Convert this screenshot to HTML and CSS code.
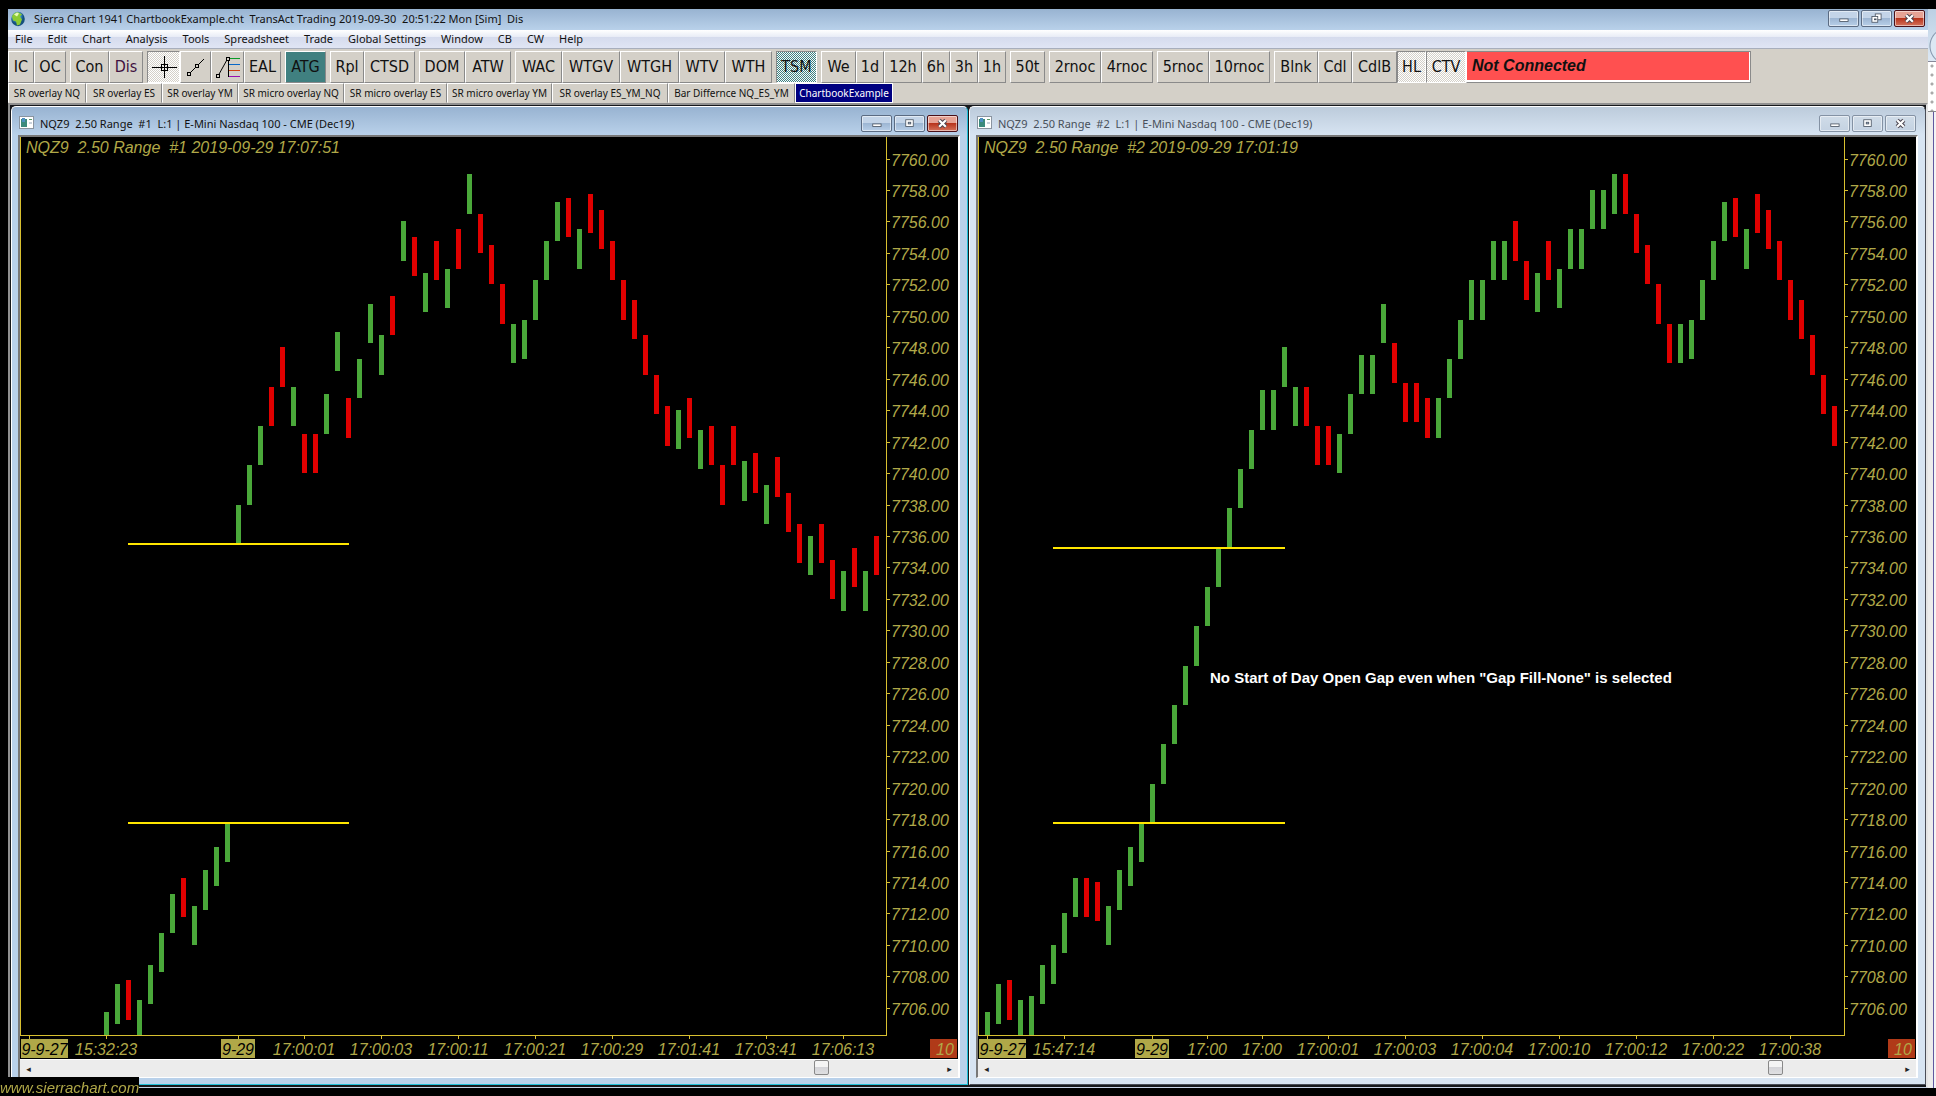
FILE: index.html
```html
<!DOCTYPE html>
<html lang="en">
<head>
<meta charset="utf-8">
<title>Sierra Chart 1941 ChartbookExample.cht</title>
<link rel="stylesheet" href="styles.css">
</head>
<body>
<svg class="defs" width="0" height="0" aria-hidden="true">
  <symbol id="i-min" viewBox="0 0 30 18"><rect x="10.500" y="9.500" width="10" height="3" fill="#fff" stroke="#4b5563"/></symbol>
  <symbol id="i-max" viewBox="0 0 30 18"><rect x="10.500" y="4.500" width="9" height="8" fill="#fff" stroke="#4b5563"/><rect x="13.500" y="7.500" width="3" height="2" fill="#a9c0da" stroke="#4b5563"/></symbol>
  <symbol id="i-restore" viewBox="0 0 30 18"><rect x="13.500" y="3.500" width="7" height="7" fill="#fff" stroke="#4b5563"/><rect x="9.500" y="6.500" width="7" height="7" fill="#fff" stroke="#4b5563"/><rect x="12.500" y="9.500" width="2" height="1" fill="#a9c0da" stroke="#4b5563"/></symbol>
  <symbol id="i-close" viewBox="0 0 30 18"><path d="M11 5l8 8M19 5l-8 8" stroke="#4b4550" stroke-width="5"/><path d="M11 5l8 8M19 5l-8 8" stroke="#fff" stroke-width="2.600"/></symbol>
  <symbol id="i-chart" viewBox="0 0 15 13"><rect x=".5" y=".5" width="14" height="12" fill="#fff" stroke="#8a94a0"/><rect x="2" y="3" width="6" height="8" fill="#3c8a7c"/><rect x="3" y="2" width="3" height="4" fill="#4d8fc0"/><rect x="10" y="3" width="3" height="1" fill="#5c9a6a"/><rect x="10" y="6" width="3" height="2" fill="#c9d2dc"/></symbol>
</svg>
<div class="screen">
  <main class="app">
    <header class="titlebar">
      <svg class="globe" viewBox="0 0 14 15"><defs><radialGradient id="g" cx="40%" cy="30%"><stop offset="0" stop-color="#d9f1ff"/><stop offset=".5" stop-color="#3f9bd8"/><stop offset="1" stop-color="#14507e"/></radialGradient></defs><ellipse cx="7" cy="7.500" rx="6.800" ry="7.200" fill="url(#g)"/><path d="M1 5C2 2 5 0 8 1l3 2-2 2 2 3-2 5-3 1-1-4-3-1z" fill="#8ccb32"/><path d="M3 3l3-2 2 1-2 3z" fill="#e9f9b5"/></svg>
      <h1 class="caption">Sierra Chart 1941 ChartbookExample.cht&nbsp; TransAct Trading 2019-09-30&nbsp; 20:51:22 Mon [Sim]&nbsp; Dis</h1>
      <div class="winbtns">
        <button class="winbtn" aria-label="Minimize"><svg><use href="#i-min"/></svg></button>
        <button class="winbtn" aria-label="Restore"><svg><use href="#i-restore"/></svg></button>
        <button class="winbtn close" aria-label="Close"><svg><use href="#i-close"/></svg></button>
      </div>
    </header>
    <nav class="menu">
      <button>File</button><button>Edit</button><button>Chart</button><button>Analysis</button><button>Tools</button><button>Spreadsheet</button><button>Trade</button><button>Global Settings</button><button>Window</button><button>CB</button><button>CW</button><button>Help</button>
    </nav>
    <div class="toolbar">
      <div class="group"><button class="w26">IC</button><button class="w32">OC</button></div>
      <div class="group"><button class="w39">Con</button><button class="w34 plum">Dis</button></div>
      <div class="group">
        <button class="w33 on" aria-label="Crosshair"><svg width="28" height="26" viewBox="0 0 28 26" fill="none" stroke="#000"><path d="M14.500 2v22M2 13.500h25"/><rect x="11.500" y="10.500" width="6" height="6"/></svg></button>
        <button class="w31" aria-label="Line"><svg width="24" height="26" viewBox="0 0 24 26" fill="none" stroke="#000"><path d="M5 20L20 5"/><rect x="3.500" y="18.500" width="3" height="3" fill="#d4d0c8"/><rect x="11.500" y="10.500" width="3" height="3" fill="#d4d0c8"/></svg></button>
        <button class="w33" aria-label="Retracement"><svg width="28" height="26" viewBox="0 0 28 26" fill="none"><path d="M14 4.500h12" stroke="#0a9a28"/><path d="M14 10.500h12" stroke="#0868c8"/><path d="M14 16.500h12" stroke="#d04010"/><path d="M14 22.500h12" stroke="#9a10b0"/><path d="M14.500 4v19M4 22L14 4" stroke="#000"/><rect x="12.500" y="3.500" width="3" height="3" stroke="#000" fill="#d4d0c8"/><rect x="2.500" y="20.500" width="3" height="3" stroke="#000" fill="#d4d0c8"/></svg></button>
        <button class="w37">EAL</button>
      </div>
      <div class="group"><button class="w41 teal">ATG</button></div>
      <div class="group"><button class="w34">Rpl</button><button class="w51">CTSD</button></div>
      <div class="group"><button class="w46">DOM</button><button class="w46">ATW</button></div>
      <div class="group"><button class="w47">WAC</button><button class="w58">WTGV</button><button class="w59">WTGH</button><button class="w46">WTV</button><button class="w47">WTH</button></div>
      <div class="group"><button class="w41 on tealon">TSM</button></div>
      <div class="group"><button class="w35">We</button><button class="w28">1d</button><button class="w38">12h</button><button class="w28">6h</button><button class="w28">3h</button><button class="w28">1h</button></div>
      <div class="group"><button class="w35">50t</button></div>
      <div class="group"><button class="w52">2rnoc</button><button class="w52">4rnoc</button></div>
      <div class="group"><button class="w52">5rnoc</button><button class="w61">10rnoc</button></div>
      <div class="group"><button class="w44">Blnk</button><button class="w34">Cdl</button><button class="w45">CdlB</button><button class="w29 on">HL</button><button class="w40 on">CTV</button><output class="status">Not Connected</output></div>
    </div>
    <div class="tabs">
      <button class="t78">SR overlay NQ</button><button class="t76">SR overlay ES</button><button class="t76">SR overlay YM</button><button class="t106">SR micro overlay NQ</button><button class="t103">SR micro overlay ES</button><button class="t105">SR micro overlay YM</button><button class="t116">SR overlay ES_YM_NQ</button><button class="t127">Bar Differnce NQ_ES_YM</button><button class="t98 current">ChartbookExample</button>
    </div>
    <div class="workspace">
      <section class="window active">
        <header class="wintitle">
          <svg class="docicon"><use href="#i-chart"/></svg>
          <h2 class="caption">NQZ9&nbsp; 2.50 Range&nbsp; #1&nbsp; L:1 | E-Mini Nasdaq 100 - CME (Dec19)</h2>
          <div class="winbtns">
            <button class="winbtn" aria-label="Minimize"><svg><use href="#i-min"/></svg></button>
            <button class="winbtn" aria-label="Maximize"><svg><use href="#i-max"/></svg></button>
            <button class="winbtn close" aria-label="Close"><svg><use href="#i-close"/></svg></button>
          </div>
        </header>
        <div class="frame">
          <div class="plot" id="chart1"></div>
          <div class="scroll"><button aria-label="Scroll left">◂</button><div class="track"><div class="thumb" style="margin-left:86%"></div></div><button aria-label="Scroll right">▸</button></div>
        </div>
      </section>
      <section class="window">
        <header class="wintitle">
          <svg class="docicon"><use href="#i-chart"/></svg>
          <h2 class="caption">NQZ9&nbsp; 2.50 Range&nbsp; #2&nbsp; L:1 | E-Mini Nasdaq 100 - CME (Dec19)</h2>
          <div class="winbtns">
            <button class="winbtn" aria-label="Minimize"><svg><use href="#i-min"/></svg></button>
            <button class="winbtn" aria-label="Maximize"><svg><use href="#i-max"/></svg></button>
            <button class="winbtn" aria-label="Close"><svg><use href="#i-close"/></svg></button>
          </div>
        </header>
        <div class="frame">
          <div class="plot" id="chart2"></div>
          <div class="scroll"><button aria-label="Scroll left">◂</button><div class="track"><div class="thumb" style="margin-left:85.500%"></div></div><button aria-label="Scroll right">▸</button></div>
        </div>
      </section>
    </div>
  </main>
  <aside class="behind"><div class="b-title"></div><div class="b-dots"></div><div class="b-body"></div></aside>
</div>
<a class="site" href="#">www.sierrachart.com</a>
<script src="chart.js"></script>
</body>
</html>
```

FILE: styles.css
```css
* { box-sizing: border-box; }
body {
  margin: 0;
  background: #000;
  font: 12px/16px "Noto Sans", "Open Sans", sans-serif;
  color: #111;
}
button { font: inherit; color: inherit; padding: 0; margin: 0; border: 0; background: none; white-space: nowrap; }
h1, h2 { margin: 0; font: inherit; }
.defs { position: absolute; }

.screen { display: flex; min-height: 100vh; padding: 9px 0 8px 8px; }
.app { flex: 1; min-width: 0; display: flex; flex-direction: column; }

/* title bars */
.titlebar {
  display: flex;
  height: 21px;
  padding: 0 3px;
  background: linear-gradient(#98b3d1, #b9d1ea);
}
.globe { width: 14px; height: 16px; margin: 2px 9px 0 0; }
.caption { flex: 1; font-size: 11px; line-height: 19px; white-space: nowrap; }
.winbtns { display: flex; gap: 2px; margin-top: 1px; }
.winbtn {
  width: 31px;
  height: 17px;
  border: 1px solid #5b6b82;
  border-radius: 2px;
  box-shadow: inset 0 0 0 1px rgba(255, 255, 255, .5);
  background: linear-gradient(#c3d4e8 45%, #9db6d3 50%, #b8cfe8);
}
.winbtn svg { display: block; width: 29px; height: 15px; }
.winbtn.close { border-color: #4a1018; background: linear-gradient(#e6a294 45%, #b8341c 50%, #d4735c); }

.menu {
  display: flex;
  gap: 15px;
  height: 19px;
  padding-left: 7px;
  border-bottom: 1px solid #a8aebc;
  background: linear-gradient(#fff, #e8ecf6 38%, #d5dbed 40%, #e0e5f4);
  font-size: 11px;
  line-height: 18px;
}

/* toolbars */
.toolbar {
  display: flex;
  gap: 4px;
  height: 34px;
  padding-top: 2px;
  background: #d4d0c8;
  font: 16px/28px "DejaVu Sans Condensed", "DejaVu Sans", sans-serif;
}
.group { display: flex; height: 32px; }
.toolbar button {
  border: 1px solid;
  border-color: #fff #8a8a8a #8a8a8a #fff;
  background-color: #d4d0c8;
  overflow: hidden;
}
.toolbar svg { display: block; margin: 0 auto; }
.toolbar .plum { color: #401040; }
.toolbar .on {
  border-color: #8a8a8a #fff #fff #8a8a8a;
  background: repeating-conic-gradient(#fff 0 25%, #d4d0c8 0 50%) 0 0 / 2px 2px;
}
.toolbar .teal { background: #408080; }
.toolbar .tealon { background: repeating-conic-gradient(#408080 0 25%, #f4fafa 0 50%) 0 0 / 2px 2px; }
.w26 { width: 26px; } .w28 { width: 28px; } .w29 { width: 29px; } .w31 { width: 31px; }
.w32 { width: 32px; } .w33 { width: 33px; } .w34 { width: 34px; } .w35 { width: 35px; }
.w37 { width: 37px; } .w38 { width: 38px; } .w39 { width: 39px; } .w40 { width: 40px; }
.w41 { width: 41px; } .w44 { width: 44px; } .w45 { width: 45px; } .w46 { width: 46px; }
.w47 { width: 47px; } .w51 { width: 51px; } .w52 { width: 52px; } .w58 { width: 58px; }
.w59 { width: 59px; } .w61 { width: 61px; }
.status {
  width: 285px;
  padding-left: 5px;
  border: 1px solid;
  border-color: #8a8a8a #8a8a8a #8a8a8a #fff;
  box-shadow: inset -1px -2px #fff;
  background: #ff5050;
  font: italic bold 16px/28px "Liberation Sans", sans-serif;
}
.tabs { display: flex; height: 20px; background: #d4d0c8; font-size: 10px; line-height: 17px; }
.tabs button { height: 20px; border: 1px solid; border-color: #fff #8a8a8a #d4d0c8 #fff; }
.tabs .current { background: #000080; color: #fff; border: 1px solid #fff; }
.t76 { width: 76px; } .t78 { width: 78px; } .t98 { width: 98px; } .t103 { width: 103px; }
.t105 { width: 105px; } .t106 { width: 106px; } .t116 { width: 116px; } .t127 { width: 127px; }

/* chart windows */
.workspace {
  flex: 1;
  display: grid;
  grid-template-columns: 1fr 1fr;
  gap: 1px;
  padding: 1px 0 2px 1px;
  border: 2px solid #909090;
  border-right-color: #e4e4e4;
  border-bottom: 1px solid #c8d4e8;
  background: #16181c;
}
.window {
  display: flex;
  flex-direction: column;
  min-width: 0;
  padding: 0 7px 6px 6px;
  border: 1px solid #fff;
  border-right-color: #4a4e58;
  border-bottom-color: #4a4e58;
  border-radius: 5px 5px 0 0;
  background: linear-gradient(#bccbdb, #d7e4f2 28px);
  color: #48505a;
}
.window.active {
  border-right-color: #20c0d8;
  border-bottom-color: #20c0d8;
  background: linear-gradient(#98b3d1, #b9d1ea 28px);
  color: #111;
}
.window:not(.active) .winbtn { border-color: #8492a4; background: linear-gradient(#d0dce8, #c4d2e2); }
.wintitle { display: flex; height: 28px; padding-right: 2px; }
.wintitle .caption { line-height: 33px; }
.wintitle .winbtns { margin-top: 8px; }
.docicon { width: 15px; height: 13px; margin: 9px 6px 0 1px; }
.frame {
  flex: 1;
  display: flex;
  flex-direction: column;
  border: solid #787878;
  border-width: 2px 2px 1px 2px;
  border-right-color: #fff;
  border-bottom-color: #fff;
  background: #000;
}
.plot { flex: 1 0 480px; min-width: 0; position: relative; overflow: hidden; }
.plot svg { position: absolute; inset: 0; width: 100%; height: 100%; }
.plot text { font: italic 16px "Liberation Sans", Arial, sans-serif; fill: #b0a848; white-space: pre; }
.plot .mid { text-anchor: middle; }
.plot .dark { fill: #000; }
.plot .note { font: bold 15px "Liberation Sans", Arial, sans-serif; fill: #fff; }
.axis { stroke: #d8c030; fill: none; shape-rendering: crispEdges; }
.up { fill: #4aa83a; }
.down { fill: #e00000; }
.level { fill: #ffe600; }
.tag { fill: #b0a848; }
.count { fill: #b03a18; }

.scroll { display: flex; height: 18px; background: #ececec; border-top: 1px solid #fff; }
.scroll button { width: 17px; font: 9px/16px "DejaVu Sans", sans-serif; color: #222; }
.track { flex: 1; }
.thumb {
  width: 15px;
  height: 15px;
  border: 1px solid #888;
  border-radius: 2px;
  background: linear-gradient(#f4f4f4 45%, #d4d4d8 50%, #e0e0e2);
}

/* sliver of the window behind */
.behind { width: 8px; display: flex; flex-direction: column; background: #ececec; }
.b-title { height: 53px; background: radial-gradient(circle at 20px 37px, #dce8f4 17px, #8496ac 18px, transparent 19px), linear-gradient(#bcd0e4, #dce8f4); border-bottom: 1px solid #889; }
.b-dots { height: 50px; background: radial-gradient(circle at 4px 4px, #aaa 1px, #fff 2px) 0 0 / 8px 9px; border-bottom: 1px solid #888; }
.b-body { flex: 1; border-right: 2px solid #f4f4f4; box-shadow: inset -1px 0 #6058a0; }

.site {
  position: fixed;
  left: 0;
  bottom: 0;
  padding-top: 2px;
  background: #000;
  color: #b0a848;
  font: italic 15px/17px "Liberation Sans", Arial, sans-serif;
  text-decoration: none;
}
```

FILE: chart.js
```js
// Each bar is a colour letter plus its high, in quarter points below 7760. Every bar spans 2.50.
const TOP_PRICE = 7760;
const TICK = 3.932;
const TOP_Y = 21.5;
const BAR_STEP = 11;
const AXIS_W = 72;
const AXIS_H = 24;

const charts = {
  chart1: {
    title: 'NQZ9  2.50 Range  #1 2019-09-29 17:07:51',
    start: 84,
    bars: 'G217 G210 R209 G214 G205 G197 G187 R183 G190 G181 G175 G169 G88 G78 G68 R58 R48 G58 R70 R70 G60 G44 R61 G51 G37 G45 R35 G16 R20 G29 R21 G28 R18 G4 R14 R22 R32 G42 G41 G31 G21 G11 R10 G18 R9 R13 R21 R31 R36 R45 R55 R63 G64 R61 G69 R68 R78 R68 G77 R75 G83 R76 R85 R93 G96 R93 R102 G105 R99 G105 R96',
    levels: [[108, 406, 221], [108, 685, 221]],
    times: [[9, '9-9-27', 1], [86, '15:32:23'], [218, '9-29', 1], [284, '17:00:01'], [361, '17:00:03'], [438, '17:00:11'], [515, '17:00:21'], [592, '17:00:29'], [669, '17:01:41'], [746, '17:03:41'], [823, '17:06:13']]
  },
  chart2: {
    title: 'NQZ9  2.50 Range  #2 2019-09-29 17:01:19',
    start: 7,
    bars: 'G217 G210 R209 G214 G213 G205 G200 G192 G183 R183 R184 G190 G181 G175 G169 G159 G149 G139 G129 G119 G109 G99 G89 G79 G69 G59 G59 G48 G58 R58 R68 R68 G70 G60 G50 G50 G37 R47 R57 R57 R61 G61 G51 G41 G31 G31 G21 G21 R16 R26 G29 R21 G28 G18 G18 G8 G8 G4 R4 R14 R22 R32 R42 G42 G41 G31 G21 G11 R10 G18 R9 R13 R21 R31 R36 R45 R55 R63',
    levels: [[75, 410, 232], [75, 685, 232]],
    times: [[9, '9-9-27', 1], [86, '15:47:14'], [174, '9-29', 1], [229, '17:00'], [284, '17:00'], [350, '17:00:01'], [427, '17:00:03'], [504, '17:00:04'], [581, '17:00:10'], [658, '17:00:12'], [735, '17:00:22'], [812, '17:00:38']],
    note: [232, 546, 'No Start of Day Open Gap even when "Gap Fill-None" is selected']
  }
};

const yOf = n => Math.round(TOP_Y + n * TICK);
const rect = (cls, x, y, w, h) => `<rect class="${cls}" x="${x}" y="${y}" width="${w}" height="${h}"/>`;
const text = (cls, x, y, s) => `<text class="${cls}" x="${x}" y="${y}">${s}</text>`;

function draw(id) {
  const c = charts[id];
  const el = document.getElementById(id);
  const right = el.clientWidth - AXIS_W;
  const bottom = el.clientHeight - AXIS_H;
  let out = '';
  c.bars.split(' ').forEach((b, i) => {
    const x = c.start + i * BAR_STEP;
    const n = +b.slice(1);
    const y = yOf(n);
    const h = Math.min(yOf(n + 10), bottom) - y;
    if (h > 0 && x + 5 < right) out += rect(b[0] === 'G' ? 'up' : 'down', x, y, 5, h);
  });
  c.levels.forEach(l => { out += rect('level', l[0], l[1], l[2], 2); });
  let axis = `M.5 0V${bottom + .5}H${right + .5}V0`;
  for (let p = TOP_PRICE; ; p -= 2) {
    const y = yOf((TOP_PRICE - p) * 4);
    if (y > bottom - 8) break;
    axis += `M${right} ${y + .5}h4`;
    out += text('', right + 5, y + 7, p.toFixed(2));
  }
  c.times.forEach(([x, s, tag]) => {
    if (x > right) return;
    axis += `M${x + .5} ${bottom}v4`;
    if (tag) {
      const w = s.length > 4 ? 47 : 34;
      const left = Math.max(1, x - w / 2);
      out += rect('tag', left, bottom + 4, w, 19) + text('mid dark', left + w / 2, bottom + 20, s);
    } else {
      out += text('mid', x, bottom + 20, s);
    }
  });
  const w = el.clientWidth;
  out += rect('count', w - 28, bottom + 4, 27, 19) + text('', w - 22, bottom + 20, '10');
  out += text('', 6, 16, c.title);
  if (c.note) out += text('note', ...c.note);
  el.innerHTML = `<svg>${out}<path class="axis" d="${axis}"/></svg>`;
}

function drawAll() { Object.keys(charts).forEach(draw); }
drawAll();
addEventListener('resize', drawAll);
```
